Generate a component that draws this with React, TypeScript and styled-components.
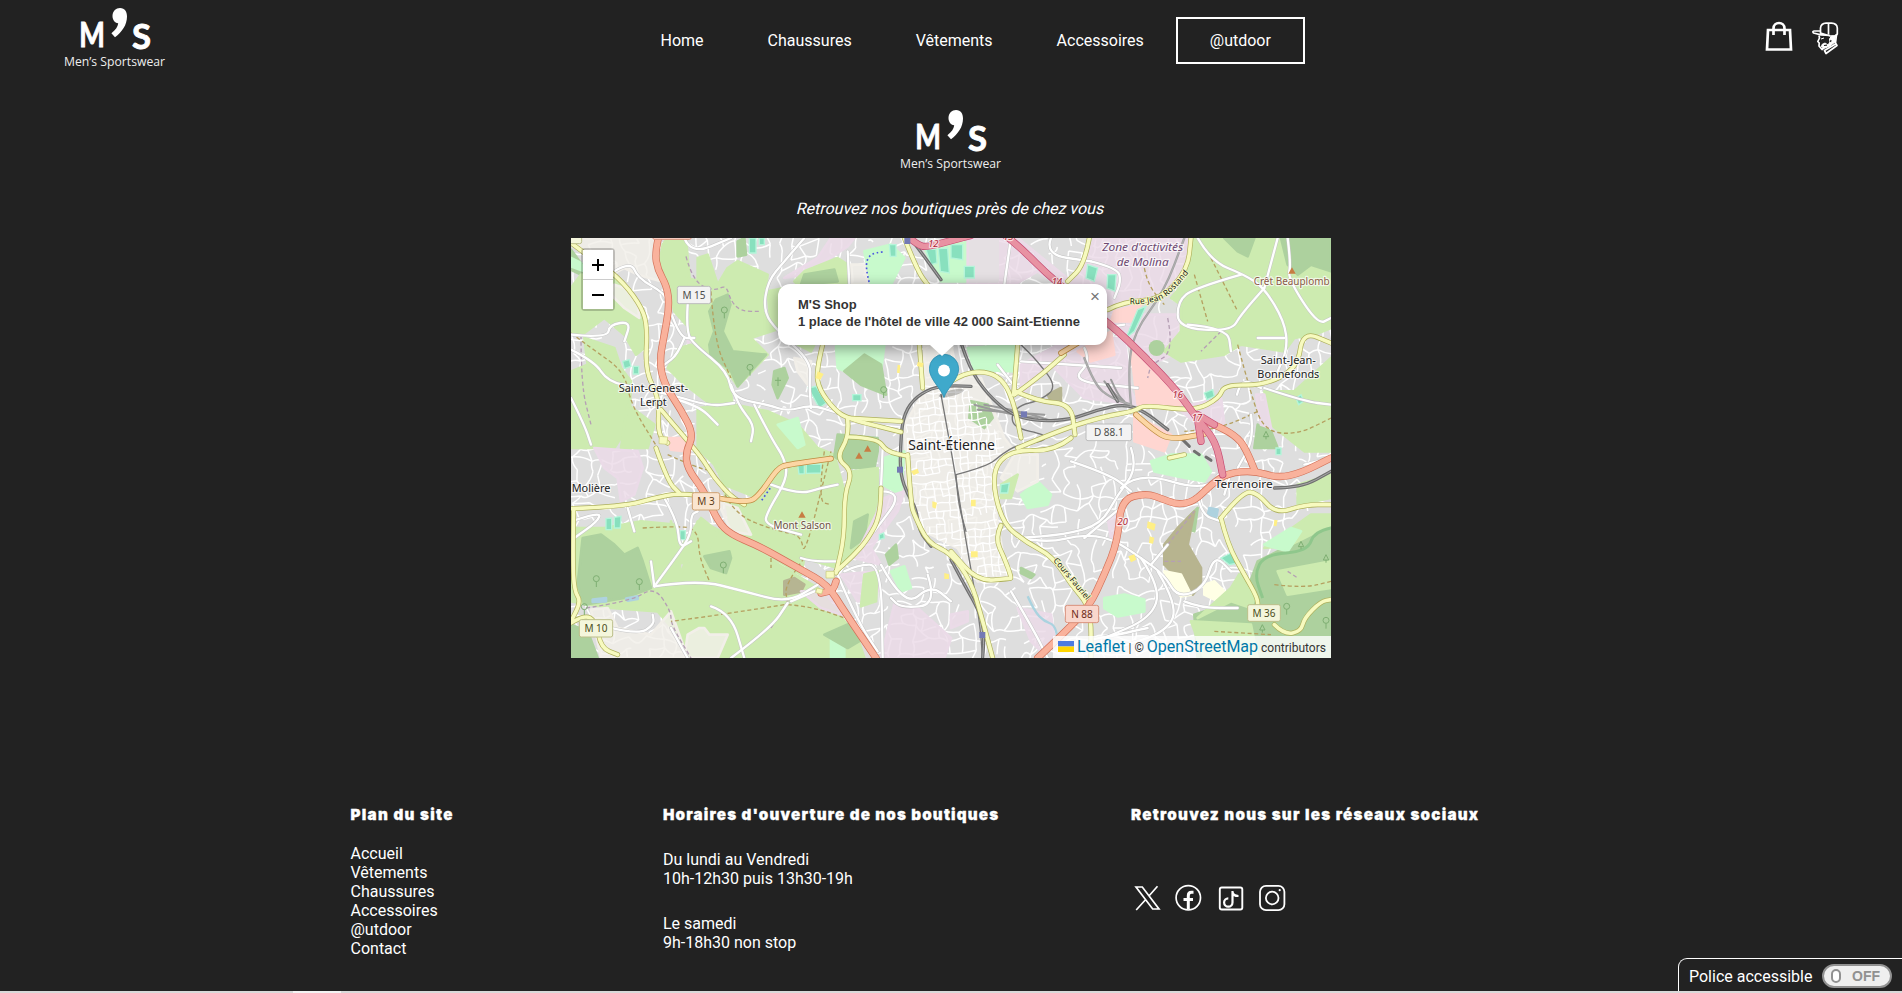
import React from "react";
import styled, { createGlobalStyle } from "styled-components";

const GlobalStyle = createGlobalStyle`
  * { box-sizing: border-box; }
  body { margin: 0; background: #222; color: #fff; font: 16px/19px Roboto, sans-serif; overflow: hidden; }
  a { color: inherit; text-decoration: none; }
`;

const Page = styled.div`
  height: 993px;
  display: flex;
  flex-direction: column;
  background: #222;
`;

const Header = styled.header`
  height: 80px;
  flex: none;
  display: grid;
  grid-template-columns: 628.5px max-content 1fr;
`;

const LogoSvg = styled.svg`
  display: block;
  width: 102px;
  height: 62px;
  overflow: visible;
`;

const Brand = styled.a`
  padding: 8px 0 0 64px;
`;

const Nav = styled.nav`
  display: flex;
  justify-content: flex-start;
  align-items: center;
`;

const NavLink = styled.a<{ $boxed?: boolean }>`
  flex: none;
  padding: 12px 32px;
  ${(p) => p.$boxed && "border: 2px solid #fff;"}
`;

const Tools = styled.div`
  display: flex;
  justify-content: flex-end;
  gap: 18px;
  padding: 21px 63px 0 0;
`;

const Icon = styled.svg<{ $w: number; $h: number }>`
  display: block;
  flex: none;
  width: ${(p) => p.$w}px;
  height: ${(p) => p.$h}px;
`;

const Main = styled.main`
  flex: none;
  height: 711px;
  display: flex;
  flex-direction: column;
  align-items: center;
  padding-top: 30px;
`;

const Tagline = styled.p`
  margin: 27px 0 20px;
  transform: skewX(-14deg);
`;

const MapFrame = styled.div`
  position: relative;
  width: 760px;
  height: 420px;
  overflow: hidden;
  background: #ddd;
`;

const MapSvg = styled.svg`
  display: block;
  width: 760px;
  height: 420px;
`;

const ZoomControl = styled.div`
  position: absolute;
  left: 10px;
  top: 10px;
  border: 2px solid rgba(0, 0, 0, 0.2);
  border-radius: 4px;
  background-clip: padding-box;
`;

const ZoomButton = styled.div<{ $last?: boolean }>`
  width: 30px;
  height: ${(p) => (p.$last ? 29 : 30)}px;
  display: flex;
  align-items: center;
  justify-content: center;
  background: #fff;
  border-bottom: ${(p) => (p.$last ? 0 : 1)}px solid #ccc;
`;

const Popup = styled.div`
  position: absolute;
  left: 207px;
  top: 46px;
  width: 329px;
  height: 61px;
  padding: 13px 24px 13px 20px;
  border-radius: 12px;
  background: #fff;
  color: #333;
  box-shadow: 0 3px 14px rgba(0, 0, 0, 0.4);
  font: bold 13px/16.5px "Liberation Sans", Arial, sans-serif;
  white-space: nowrap;
`;

const PopupClose = styled.span`
  position: absolute;
  top: 0;
  right: 0;
  width: 24px;
  height: 24px;
  color: #757575;
  font: 17px/25px "Liberation Sans", Tahoma, sans-serif;
  text-align: center;
`;

const PopupTip = styled.span`
  position: absolute;
  left: 152px;
  top: 61px;
  border: solid transparent;
  border-width: 0 12px;
  border-top: 11px solid #fff;
`;

const Pin = styled.svg`
  position: absolute;
  left: 358px;
  top: 116px;
  width: 45px;
  height: 46px;
`;

const Attribution = styled.div`
  position: absolute;
  right: 0;
  bottom: 0;
  width: 278px;
  height: 22px;
  display: flex;
  align-items: baseline;
  justify-content: space-between;
  padding: 0 5px;
  background: rgba(255, 255, 255, 0.8);
  color: #333;
  font-size: 12px;
  line-height: 21px;
  white-space: nowrap;

  a { color: #0078a8; font-size: 16px; }
`;

const Footer = styled.footer`
  flex: none;
  height: 200px;
  display: grid;
  grid-template-columns: 312.5px 468px 420px;
  padding: 14px 0 0 350.5px;
`;

const Title = styled.h3<{ $spacing: number }>`
  margin: 0;
  font: 900 15.2px/19px Inter, sans-serif;
  letter-spacing: ${(p) => p.$spacing}px;
  white-space: nowrap;
  -webkit-text-stroke: 0.3px #fff;
`;

const LinkList = styled.div`
  display: flex;
  flex-direction: column;
  margin-top: 20px;
`;

const Hours = styled.p<{ $top: number }>`
  margin: ${(p) => p.$top}px 0 0;
`;

const Socials = styled.div`
  display: flex;
  gap: 14px;
  margin-top: 60px;
  padding-left: 2px;
`;

const BottomStrip = styled.div`
  height: 2px;
  flex: none;
  padding-left: 293px;
  background: #d9d9d9;
`;

const StripThumb = styled.div`
  width: 48px;
  height: 2px;
  background: #f3f3f3;
`;

const FontSwitch = styled.div`
  position: fixed;
  right: 0;
  bottom: 2px;
  width: 224px;
  height: 33px;
  display: flex;
  align-items: center;
  justify-content: space-between;
  padding: 3px 10px 0 10px;
  border: solid #fff;
  border-width: 1px 0 0 1px;
  border-radius: 9px 0 0 0;
  background: #222;
`;

const Toggle = styled.span`
  width: 70px;
  height: 24px;
  display: flex;
  align-items: center;
  justify-content: space-between;
  padding: 0 10px 0 7px;
  margin-top: -2px;
  border: 2px solid #919191;
  border-radius: 12px;
  background: #efefef;
  color: #919191;
  font: bold 14px/20px "Liberation Sans", Arial, sans-serif;
`;

const Knob = styled.span`
  width: 10px;
  height: 14px;
  border: 2px solid #919191;
  border-radius: 5px;
  background: #fff;
`;

function Logo() {
  return (
    <LogoSvg viewBox="0 0 102 62" fill="#fff">
      <text x="15.2" y="39.400" fontFamily="Lato" fontWeight="700" fontSize="34" stroke="#fff" strokeWidth=".9" textLength="25.600" lengthAdjust="spacingAndGlyphs">M</text>
      <path d="M56 0C61 0 63 4 63 8.500C63 17 58 24 51 29.200L47.400 25.200C51.500 22 53.700 18.800 54.200 15.200C50.500 14.800 48.300 11.500 48.500 7.500C48.700 3 52 0 56 0Z" />
      <text x="68" y="41.200" fontFamily="Lato" fontWeight="700" fontSize="34" stroke="#fff" strokeWidth=".9" textLength="19" lengthAdjust="spacingAndGlyphs">S</text>
      <text x="0" y="57.800" fontFamily="Open Sans, Noto Sans" fontSize="13" fill="#eee" textLength="101" lengthAdjust="spacingAndGlyphs">Men’s Sportswear</text>
    </LogoSvg>
  );
}

type Area = [string, string];

const GREEN = "#cdebb0";
const FOREST = "#add19e";
const LILAC = "#ebdbe8";
const PINK = "#ffd6d1";
const PARK = "#c8facc";
const CREAM = "#f2efe9";
const TEAL = "#88e0be";
const SAND = "#b6b592";
const SCHOOL = "#ffffe5";

/* Land cover, in map units (three per pixel). */
const areas: Area[] = [
  [CREAM, "0,0 250,0 250,80 270,130 200,110 160,90 120,110 60,60"],
  [FOREST, "0,35 40,90 30,110 0,95"],
  [PARK, "0,60 30,75 40,100 0,85"],
  [GREEN, "0,150 30,110 130,125 210,205 220,330 195,350 160,290 100,240 40,285 0,290"],
  [CREAM, "130,140 160,150 200,195 205,240 160,210 120,170"],
  [GREEN, "40,300 130,330 150,390 180,430 175,560 130,630 0,630 0,400 50,380"],
  [GREEN, "170,500 250,560 230,630 150,630"],
  [GREEN, "290,0 345,0 350,60 360,160 345,260 310,220 290,140 265,80 275,20"],
  [GREEN, "345,120 440,140 470,90 500,70 590,110 575,220 615,275 540,300 590,350 500,445 470,400 370,320 350,280"],
  [GREEN, "380,60 410,50 440,140 380,150"],
  [FOREST, "435,185 470,170 478,200 455,280 485,340 585,350 530,410 500,445 480,400 420,360 415,320 430,280 415,220"],
  [LILAC, "350,310 370,320 390,380 440,440 425,445 375,375"],
  [GREEN, "290,390 325,330 360,320 470,400 485,500 420,500 330,430"],
  [GREEN, "380,510 490,500 590,520 680,560 740,630 790,650 820,760 800,990 700,960 690,1010 480,885 460,750 500,790 560,780 460,740 430,680 380,630"],
  [GREEN, "590,160 640,150 640,260 600,270"],
  [FOREST, "500,10 520,0 525,50 500,55"],
  [LILAC, "640,120 700,110 830,25 850,0 780,0 740,60"],
  [GREEN, "670,130 700,100 800,60 830,80 830,140 680,140"],
  [FOREST, "700,110 790,95 800,130 690,140"],
  [PARK, "880,40 960,20 1000,60 960,140 900,140"],
  [CREAM, "840,80 880,80 890,140 840,140"],
  [PARK, "1060,30 1280,0 1280,130 1110,130"],
  [LILAC, "1190,0 1340,0 1500,130 1540,80 1570,0 1850,0 1850,100 1770,180 1690,190 1660,230 1840,230 1830,340 1760,370 1680,300 1620,260 1600,180 1460,140 1400,100 1330,140 1190,140"],
  [LILAC, "1500,300 1660,300 1680,460 1700,500 1540,480 1440,380 1350,470 1350,380"],
  [PINK, "1520,340 1620,280 1630,350 1560,370"],
  [PINK, "1680,340 1750,380 1800,450 1860,520 1700,500"],
  [PINK, "1690,530 1800,590 1780,640 1690,610"],
  [PINK, "1630,220 1710,200 1680,250 1620,250"],
  [GREEN, "1860,0 2280,0 2280,270 2230,290 2170,300 2140,340 2010,320 1960,350 1830,370 1780,340 1830,280 1830,200 1800,180 1850,120"],
  [FOREST, "2130,0 2280,0 2280,100 2220,80 2180,110 2150,80"],
  [FOREST, "1960,0 2050,0 2030,55 2000,40"],
  [GREEN, "2080,460 2170,460 2280,360 2280,640 2200,640 2100,560"],
  [FOREST, "2060,560 2100,580 2120,630 2050,630"],
  [LILAC, "1820,510 1950,480 1960,560 1880,560"],
  [LILAC, "2055,470 2080,470 2100,570 2070,560"],
  [PARK, "795,325 940,320 930,400 870,420 800,390"],
  [GREEN, "680,320 730,320 720,340"],
  [FOREST, "820,400 880,350 930,380 945,470 870,440"],
  [FOREST, "610,400 640,390 650,420 620,480 605,440"],
  [PARK, "620,560 680,540 700,620 680,630"],
  [CREAM, "670,360 720,370 710,440 680,400"],
  [PARK, "1190,330 1330,320 1330,400 1210,395"],
  [CREAM, "1060,320 1140,320 1160,410 1230,420 1300,600 1330,640 1260,700 1280,860 1310,1020 1220,1030 1160,930 1060,880 1010,760 1000,560 1060,460"],
  [FOREST, "1200,490 1250,500 1265,540 1240,570 1195,540"],
  [SAND, "1430,470 1470,450 1470,490 1440,490"],
  [PINK, "290,600 340,600 345,640 300,635"],
  [LILAC, "70,630 200,640 215,690 190,770 150,790 140,720 100,690"],
  [PARK, "940,660 1000,640 990,770 935,740"],
  [FOREST, "800,590 920,600 920,640 910,690 840,690 790,655"],
  [GREEN, "845,700 920,690 920,780 900,860 840,950 810,980 830,790"],
  [FOREST, "850,850 890,830 880,900 840,930"],
  [GREEN, "0,870 100,870 210,850 310,860 330,1010 380,850 430,870 490,900 690,1020 740,1050 790,1110 860,1200 880,1260 350,1260 320,1190 260,1120 120,1110 0,1090"],
  [GREEN, "300,850 325,935 390,840 440,880 400,960 310,980"],
  [FOREST, "35,900 90,890 130,920 160,950 200,930 215,970 240,1050 160,1080 40,1100 20,1040"],
  [FOREST, "400,955 475,940 480,960 465,1005 420,990"],
  [CREAM, "440,790 500,810 540,890 480,880"],
  [CREAM, "60,1115 110,1110 140,1170 240,1190 300,1120 350,1260 90,1260"],
  [CREAM, "350,1190 385,1170 400,1170 415,1190 470,1190 440,1260 340,1260"],
  ["#aed2df", "65,1085 105,1080 105,1090 65,1092"],
  ["#aed2df", "165,1082 200,1075 200,1083 170,1088"],
  [FOREST, "0,1160 50,1180 80,1260 0,1260"],
  [SAND, "640,1030 670,1020 700,1040 690,1060 640,1070"],
  [LILAC, "690,1060 780,1060 840,1140 750,1110"],
  [LILAC, "940,780 1000,760 980,820 900,930 930,980 850,960"],
  [LILAC, "810,1010 920,1000 920,1060 860,1090"],
  [PARK, "960,1000 1000,985 1020,1050 990,1060"],
  [FOREST, "945,950 975,920 980,960 955,980"],
  [LILAC, "970,1100 1040,1110 1140,1200 1120,1260 930,1260"],
  [GREEN, "880,1010 920,1000 915,1090 870,1105"],
  [PARK, "780,1200 820,1200 820,1260 780,1260"],
  [FOREST, "760,1190 840,1155 880,1200 830,1230"],
  [PARK, "1350,770 1400,730 1440,770 1430,800 1370,810"],
  [CREAM, "1330,650 1400,650 1400,730 1340,760 1290,720"],
  [GREEN, "1290,740 1340,710 1320,780 1290,780"],
  [PARK, "1740,670 1800,650 1860,650 1890,650 1920,700 1900,730 1820,715 1750,700"],
  [LILAC, "1610,840 1650,810 1650,860 1620,900"],
  [FOREST, "1880,810 1870,880 1840,870 1850,840"],
  ["#b7b48f", "1870,820 1850,920 1890,990 1890,1040 1865,1070 1830,1030 1780,980 1780,920 1820,870"],
  [SCHOOL, "1780,1000 1830,1010 1860,1070 1830,1075 1800,1040"],
  [SCHOOL, "1900,1040 1930,1030 1960,1060 1930,1085 1900,1070"],
  [PARK, "1600,1080 1660,1070 1720,1085 1720,1120 1640,1135 1600,1110"],
  [FOREST, "2060,970 2140,930 2280,860 2280,1260 1880,1260 1870,1130 2020,1080"],
  [GREEN, "1980,1050 2010,1000 2050,1080 2040,1110 1980,1090 1880,1140"],
  [GREEN, "2120,1000 2280,970 2280,1050 2150,1070"],
  [GREEN, "2080,930 2220,830 2280,830 2280,860 2160,920"],
  [PARK, "2080,920 2160,870 2190,880 2150,940"],
  [GREEN, "2180,740 2280,710 2280,780 2180,800"],
  [GREEN, "1860,1150 2040,1160 2060,1260 1900,1260"],
  [LILAC, "1340,1110 1440,1130 1450,1200 1420,1250 1380,1210"],
  [LILAC, "1140,1130 1190,1120 1190,1150 1140,1170"],
  ["#aed2df", "1915,810 1940,815 1935,840 1910,835"],
  [FOREST, "1350,990 1390,1010 1380,1020 1350,1005"],
];

/* Sports grounds and other small teal blocks. */
const pitches: Area[] = [
  [TEAL, "535,0 555,0 555,45 535,45"], [TEAL, "565,0 580,0 580,20 565,20"],
  [TEAL, "155,370 175,365 180,385 160,392"], [TEAL, "187,385 203,385 203,408 187,408"],
  [TEAL, "712,450 735,445 765,495 745,510"], [TEAL, "845,470 870,470 870,488 845,488"],
  [TEAL, "1065,35 1095,33 1098,75 1080,80"], [TEAL, "1102,32 1130,30 1135,105 1108,100"], [TEAL, "955,20 975,20 975,55 958,55"],
  [TEAL, "1140,20 1175,20 1175,65 1140,60"], [TEAL, "1180,85 1210,85 1210,120 1180,120"],
  [TEAL, "1550,80 1580,90 1570,130 1545,120"], [TEAL, "1610,110 1635,110 1632,160 1608,150"],
  [TEAL, "1700,215 1725,205 1690,280 1665,300"], [TEAL, "105,842 122,840 122,875 105,875"], [TEAL, "130,838 150,835 148,870 130,870"],
  [TEAL, "327,878 343,878 343,905 327,905"], [TEAL, "680,680 700,679 700,707 684,708"], [TEAL, "706,679 750,678 750,705 706,706"],
  [TEAL, "1900,465 1925,455 1930,475 1908,485"], [TEAL, "2175,480 2190,470 2198,490 2183,500"],
  [TEAL, "1950,960 1980,945 2000,975 1975,980"], [TEAL, "1290,740 1315,735 1310,765 1288,765"],
  [TEAL, "925,890 938,885 940,900 925,905"], [TEAL, "2115,630 2130,630 2130,650 2115,650"],
];

const trunk = [
  "262,0 252,45 260,95 288,145 295,205 280,290 265,370 280,440 330,515 368,590 345,640 348,690 400,760 440,850 480,890 560,922 690,995 770,1040 820,1120 915,1260",
  "1400,1260 1490,1175 1555,1105 1600,1010 1640,910 1650,785 1725,765 1780,785 1820,800 1870,790 1920,740 1970,705 2050,698 2120,720 2190,705 2280,660",
  "2050,695 2025,630 1990,590 1930,560 1890,545",
  "750,1065 785,1060 795,1030",
];
const motorway = ["1300,-10 1340,20 1450,130 1620,260 1720,355 1820,460 1880,545 1935,610 1955,710", "1015,0 1040,20 1065,28 1140,8 1200,-8", "1880,545 1890,610", "1880,530 1930,560"];
const primary = ["440,780 530,798 570,765 620,690 650,680 780,662", "1695,530 1750,580 1800,605 1900,588", "1470,345 1520,315"];
const secondary = [
  "0,15 60,60 140,115 205,195 230,260 222,400 265,480 260,590 290,615", "270,515 325,580 390,655 430,720 480,775 520,800",
  "255,630 290,730 325,765", "0,812 160,805 250,780 325,765 440,780", "755,320 735,400 745,455 790,515 830,542 990,582", "830,540 990,550",
  "830,545 835,595 795,660 845,700 820,770 820,900 795,1005", "835,597 920,600 945,640 1010,655", "930,750 930,830 890,905 845,955 795,1000",
  "1045,320 1055,450", "1140,430 1180,405 1250,400 1300,430 1330,500 1350,600", "1340,320 1328,470", "1330,470 1400,420 1480,350", "1330,458 1400,490 1500,498 1512,590",
  "1340,630 1470,575 1600,535 1690,520 1720,500 1870,520 1945,480 1960,440 2080,442 2180,390 2195,280 2280,315",
  "1500,600 1450,640 1320,635 1260,700 1290,850 1360,910 1445,955 1500,1040 1560,1110 1560,1260", "1290,862 1272,900 1300,960 1322,1020 1315,1022 1220,1030 1140,940",
  "1010,650 1020,800 1030,830 1070,915 1140,945 1200,1030 1230,1130 1265,1260", "1950,840 2015,760 2060,765 2115,828 2200,800 2280,800", "1950,840 1970,920 2020,1010 2060,1080 2060,1110",
  "8,812 5,960 10,1060 30,1090 0,1150", "0,1155 40,1130 75,1150 90,1230 140,1250", "1000,0 1040,100 1070,140", "1610,215 1660,190 1770,185 1850,95 1860,0", "1555,0 1540,80 1490,130",
  "2110,1160 2140,1190 2190,1180 2200,1140 2250,1090 2280,1085", "1795,660 1840,650", 
];
const local = [
  "130,100 180,70 200,120 280,165 290,200 330,300 370,300", "350,200 345,280 370,320 470,400 485,480 590,500 650,520 720,500 800,525", "700,0 640,70 590,130 577,220 620,280 720,370 715,440 720,510",
  "340,0 360,50 480,0", "0,290 110,300 115,260 180,250 160,310", "0,335 70,370 110,430 200,450 300,470 420,505 490,495", "480,440 500,500 550,560 540,610", "830,40 835,140",
  "300,480 380,500 440,560", "340,300 320,350 280,380", "0,480 40,560 60,620", "550,500 600,600 640,660 650,720 590,820 580,860 690,890",
  "600,740 680,770 750,750 800,740", "250,1045 320,950 360,890 360,830 380,820", "250,1045 380,1025 520,1060 650,1095 740,1040", "250,1045 240,970", "420,1105 480,1125 520,1260",
  "280,780 320,850 325,930 360,910", "170,810 190,880", "0,850 90,820 80,850 10,900", "690,960 720,970 800,970", "800,1010 860,1150 920,1240", "820,1000 860,980 930,980 935,1260", "930,980 1000,1110 1080,1040 1140,1090",
  "930,760 1000,760 910,880", "935,630 930,750", "1070,1010 1100,1100 990,1110 960,1080", "660,1090 730,1060", "480,1260 600,1170 650,1095", "100,1165 200,1190 250,1160 245,1130", "300,1170 350,1260",
  "1880,0 1920,70 2020,110 2080,150 2140,250 2150,330 2120,400", "2150,0 2160,80 2150,120 2240,260 2280,240", "2010,110 1870,150 1820,190 1820,270 1980,280 2010,230 2080,150", "2080,150 2120,0", "2140,300 2060,300", "1850,260 1970,270 1980,340",
  "1320,0 1300,140", "1440,0 1420,50 1560,70", "1560,70 1640,90 1650,130 1630,180", "1280,380 1350,470", "1350,370 1650,390", "1540,330 1560,370 1500,430 1700,450", "1590,270 1660,260",
  "1680,630 1700,690 1640,770 1590,860 1480,890 1340,900", "1340,900 1430,915 1530,890 1620,900 1710,960 1780,1010 1820,1080 1900,1050 1930,950 1980,1000", "1710,960 1770,1050 1740,1140 1600,1200", "1760,1000 1820,1100 1790,1180 1640,1230 1560,1240",
  "1540,900 1660,800", "1500,670 1620,710 1680,760", "1880,770 1890,830 1950,850", "1320,1060 1390,1180 1430,1260", "1980,1000 2020,1000", "1840,1090 1890,1110 2000,1110", "1730,1170 1640,1190 1560,1205", "1740,980 1790,920", "1650,750 1700,700 1900,760 1960,690",
  "1998,470 2010,420 2070,450", "2040,530 2050,600 2000,690", "1980,700 1960,770", "2080,450 2200,490 2280,500", "2280,660 2200,680",
];
const paths = [
  "345,55 365,130 430,160 465,140 480,190 510,220 570,220", "0,285 60,330 160,400 180,500 260,630", "420,160 430,310 480,420", "30,290 30,440 60,560", "290,650 380,690 430,700 490,830 620,880 690,890 700,960 780,640", "215,870 300,865 380,870 385,960 420,1040",
  "45,1110 180,1090 250,1045 300,1120 300,1160 360,1260", "650,1100 720,1105 850,1150", "700,960 640,1040 650,1095", "600,1170 650,1090", "640,1100 450,1130 300,1150", "1720,90 1730,140 1780,200", "1790,240 1810,340 1740,380 1730,420", "1870,110 1910,250", "1920,60 2000,220",
  "1950,280 1890,340", "2000,320 2040,470 2080,580 2180,590 2280,540", "2060,520 1960,570 1840,580", "1780,970 1830,970", "2110,1040 2200,1050 2280,1030", "1930,1180 2100,1190", "2150,1000 2180,1020", "600,940 600,990", "760,640 740,790 780,800", "1790,920 1870,820",
];
const rails = [
  "1010,-10 1045,35 1110,125", "1172,320 1195,390 1250,470 1320,530 1400,550 1500,545 1580,515 1660,498 1720,520 1790,575", "1200,445 1140,442 1080,450 1025,485 995,540 988,630 988,710 1010,770 1035,810 1045,880 1080,925",
  "1140,965 1180,1040 1225,1120 1240,1180 1235,1260", "1540,360 1570,440 1620,480 1680,500", "2110,750 2190,750 2280,700", "1610,440 1640,490", "1680,500 1670,400 1690,280 1780,160 1840,0",
];
const thinRails = ["1110,470 1145,660 1180,880 1225,1140 1235,1260", "1155,710 1250,685 1290,650 1340,620 1420,610 1425,590 1330,570 1320,530 1350,500 1400,490 1460,450 1400,370 1350,320", "1155,710 1160,790 1185,880"];

/* Deterministic jittered street mesh for the built-up areas. */
function streetMesh(x0: number, y0: number, x1: number, y1: number, step: number, jitter: number, keep: number) {
  let seed = 11;
  const rnd = () => {
    seed = (seed * 16807) % 2147483647;
    return seed / 2147483647;
  };
  const cols = Math.ceil((x1 - x0) / step) + 1;
  const rows = Math.ceil((y1 - y0) / step) + 1;
  const pts: [number, number][][] = [];
  for (let r = 0; r < rows; r++) {
    pts.push([]);
    for (let c = 0; c < cols; c++) {
      pts[r].push([Math.round(x0 + c * step + (rnd() - 0.5) * jitter), Math.round(y0 + r * step + (rnd() - 0.5) * jitter)]);
    }
  }
  let d = "";
  for (let r = 0; r < rows - 1; r++) {
    for (let c = 0; c < cols - 1; c++) {
      const [x, y] = pts[r][c];
      const [rx, ry] = pts[r][c + 1];
      const [dx, dy] = pts[r + 1][c];
      const b = (rnd() - 0.5) * jitter * 0.7;
      if (rnd() < keep) d += `M${x} ${y}Q${(x + rx) / 2} ${(y + ry) / 2 + b} ${rx} ${ry}`;
      if (rnd() < keep) d += `M${x} ${y}Q${(x + dx) / 2 + b} ${(y + dy) / 2} ${dx} ${dy}`;
    }
  }
  return d;
}

const townStreets = streetMesh(-20, -20, 2320, 1300, 36, 30, 0.62);
const centreStreets = streetMesh(1000, 440, 1300, 1060, 22, 8, 0.8);

/* Turns a point list into a smoothed path through the segment midpoints. */
function smooth(list: string) {
  const p = list.split(" ").map((s) => s.split(",").map(Number));
  let d = `M${p[0][0]} ${p[0][1]}`;
  for (let i = 1; i < p.length - 1; i++) {
    d += `Q${p[i][0]} ${p[i][1]} ${(p[i][0] + p[i + 1][0]) / 2} ${(p[i][1] + p[i + 1][1]) / 2}`;
  }
  const last = p[p.length - 1];
  return `${d}L${last[0]} ${last[1]}`;
}

function Roads({ lines, casing, fill, width, edge = 4 }: { lines: string[]; casing: string; fill: string; width: number; edge?: number }) {
  return (
    <g fill="none" strokeLinecap="round" strokeLinejoin="round">
      {lines.map((l, i) => <path key={`c${i}`} d={smooth(l)} stroke={casing} strokeWidth={width + edge} />)}
      {lines.map((l, i) => <path key={`f${i}`} d={smooth(l)} stroke={fill} strokeWidth={width} />)}
    </g>
  );
}

interface LabelProps { x: number; y: number; w: number; size?: number; color?: string; italic?: boolean; children: string }

function Label({ x, y, w, size = 33, color = "#222", italic, children }: LabelProps) {
  return (
    <text x={x} y={y} textAnchor="middle" textLength={w} lengthAdjust="spacingAndGlyphs" fontSize={size} fill={color}
      fontStyle={italic ? "italic" : "normal"} stroke="#fff" strokeOpacity=".7" strokeWidth="7" strokeLinejoin="round" paintOrder="stroke">
      {children}
    </text>
  );
}

function Shield({ x, y, w, h = 52, fill, edge, color, children }: { x: number; y: number; w: number; h?: number; fill: string; edge: string; color: string; children?: string }) {
  return (
    <g>
      <rect x={x} y={y} width={w} height={h} rx="6" fill={fill} stroke={edge} strokeWidth="3" />
      <text x={x + w / 2} y={y + h / 2 + 11} textAnchor="middle" fontSize="30" fill={color}>{children}</text>
    </g>
  );
}

function CityMap() {
  return (
    <MapSvg viewBox="0 0 2280 1260" fontFamily="Noto Sans">
      <defs>
        <clipPath id="centre"><path d="M1060 440L1180 440L1260 560L1320 640L1260 700L1280 860L1310 1010L1220 1020L1160 930L1060 890L1015 760L1005 560Z" /></clipPath>
        <path id="rostand" d="M1676 199Q1760 200 1795 168T1862 92" />
        <path id="fauriel" d="M1446 968L1550 1092" />
      </defs>
      <rect width="2280" height="1260" fill="#dedede" />
      <path d={townStreets} fill="none" stroke="#fff" strokeWidth="4.500" />
      {areas.map(([fill, points], i) => (
        <polygon key={i} points={points} fill={fill} stroke={fill} strokeWidth="8" strokeLinejoin="round" fillOpacity={fill === LILAC || fill === CREAM ? 0.82 : 1} />
      ))}
      {pitches.map(([fill, points], i) => <polygon key={i} points={points} fill={fill} stroke="#b5f5da" strokeWidth="4" />)}
      <g clipPath="url(#centre)"><path d={centreStreets} fill="none" stroke="#fff" strokeWidth="4" transform="rotate(-5 1150 750)" /></g>
      <path d={smooth("1370,1075 1390,1120 1420,1150 1450,1160 1460,1200")} fill="none" stroke="#aad3df" strokeWidth="7" />
      <path d={smooth("2280,870 2230,880 2210,940 2080,950 2050,1010 2075,1080")} fill="none" stroke="#8fc78c" strokeWidth="9" />
      <g fill="none" strokeLinejoin="round">
        {paths.map((l, i) => <path key={i} d={smooth(l)} stroke={i % 3 === 0 ? "#b59fb4" : "#b5a060"} strokeWidth="4" strokeDasharray="12 8" />)}
      </g>
      <path d="M935 42C880 45 880 75 895 135M605 740L570 790" fill="none" stroke="#4b55e0" strokeWidth="5" strokeDasharray="5 8" />
      <Roads lines={local} casing="#c6c6c6" fill="#fff" width={7} edge={3} />
      <g fill="none" strokeLinecap="round">
        {["1210,500 1320,530 1400,540", "1220,515 1340,525 1420,530", "1240,500 1350,520 1440,548", "1600,430 1640,480 1670,500", "1620,425 1640,470 1660,490"].map((l) => (
          <path key={l} d={smooth(l)} stroke="#9b9b9b" strokeWidth="6" />
        ))}
        {thinRails.map((l) => <path key={l} d={smooth(l)} stroke="#777" strokeWidth="4" />)}
        {rails.map((l, i) => <path key={l} d={smooth(l)} stroke={i === 4 || i === 7 ? "#a3a3a3" : "#707070"} strokeWidth={i === 4 || i === 7 ? 7 : 10} />)}
        {rails.map((l, i) => <path key={`i${l}`} d={smooth(l)} stroke="#c4c4c4" strokeWidth={i === 4 || i === 7 ? 1 : 2} />)}
        <path d="M1835 605L1855 625M1870 640L1885 650M1905 657L1920 667" stroke="#707070" strokeWidth="9" />
      </g>
      <Roads lines={secondary} casing="#aeb05c" fill="#f7fabf" width={11} />
      <Roads lines={primary} casing="#bd8a3f" fill="#fcd6a4" width={13} />
      <Roads lines={trunk} casing="#d27057" fill="#f9b29c" width={18} />
      <Roads lines={motorway} casing="#c54a72" fill="#e892a2" width={18} />
      <path d="M765 1000h25v20h-25zM738 1050l18 4-4 14-18-4zM265 595l25 2-2 22-24-2z" fill="#f7fabf" stroke="#c6c777" strokeWidth="2" />
      {[[1350, 520], [978, 686], [1225, 1182], [1000, 0]].map(([x, y]) => <rect key={x} x={x} y={y} width="18" height="18" fill="#7379b4" />)}
      <circle cx="1757" cy="330" r="24" fill={FOREST} />
      <g fill="none" stroke="#7faf73" strokeWidth="3">
        {[[460, 216], [537, 388], [76, 1022], [205, 1031], [40, 1106], [457, 981], [938, 455], [2147, 1105], [2265, 1147]].map(([x, y]) => (
          <path key={`${x}-${y}`} d={`M${x - 9} ${y}a9 9 0 1 0 18 0a9 9 0 1 0-18 0M${x} ${y + 9}v16`} />
        ))}
        <path d="M621 418v26M612 427h18M2085 580l-8 16h16zM2085 596v8M2190 910l-8 16h16zM2190 926v8M2265 950l-8 16h16zM2265 966v8M2074 1160l-8 16h16zM2074 1176v8" />
      </g>
      <g fill="#ffef85">
        <path d="M980 380l8 2-2 24-8-2zM1040 372l18 4-4 12-16-4zM1200 785h14v20h-14zM1730 850l24 8-4 20-22-8zM1736 895l14 4-4 18-12-2zM1200 940h20v18h-20zM1672 955l18-6 6 16-16 8zM2110 845l10 2-4 18-8-2zM1020 700l20-8 4 12-16 8zM740 400l18 8-10 18-14-6zM1084 790l14 4-4 18-10-4zM1120 1005l14 4v14h-14z" />
      </g>
      <g fill="#c77d43">
        <path d="M2163 88l11 19h-22zM693 820l11 19h-22zM864 643l11 19h-22zM890 622l11 19h-22z" />
      </g>

      <Label x={1142} y={637} w={260} size={43}>Saint-Étienne</Label>
      <Label x={247} y={462} w={208}>Saint-Genest-</Label>
      <Label x={247} y={503} w={80}>Lerpt</Label>
      <Label x={60} y={762} w={116}>Molière</Label>
      <Label x={2152} y={379} w={165}>Saint-Jean-</Label>
      <Label x={2152} y={421} w={186}>Bonnefonds</Label>
      <Label x={2018} y={751} w={174}>Terrenoire</Label>
      <Label x={694} y={873} w={173} size={30} color="#6f5046">Mont Salson</Label>
      <Label x={2162} y={141} w={228} size={30} color="#8a5a46">Crêt Beauplomb</Label>
      <Label x={1715} y={40} w={243} color="#6e4a73" italic>Zone d'activités</Label>
      <Label x={1715} y={84} w={156} color="#6e4a73" italic>de Molina</Label>
      {([["12", 1087, 28], ["13", 1312, 5], ["14", 1458, 140], ["16", 1820, 479], ["17", 1878, 549], ["20", 1655, 860]] as [string, number, number][]).map(([t, x, y]) => (
        <Label key={t} x={x} y={y} w={31} size={28} color="#b01c32" italic>{t}</Label>
      ))}
      <g fontSize="25" fill="#222" stroke="#f7fabf" strokeWidth="5" paintOrder="stroke">
        <text><textPath href="#rostand" textLength="212">Rue Jean Rostand</textPath></text>
        <text><textPath href="#fauriel" textLength="156">Cours Fauriel</textPath></text>
      </g>
      <Shield x={319} y={145} w={100} fill="#f3f3f3" edge="#bcbcbc" color="#4d4d4d">M 15</Shield>
      <Shield x={1545} y={558} w={137} h={50} fill="#f3f3f3" edge="#bcbcbc" color="#4d4d4d">D 88.1</Shield>
      <Shield x={364} y={764} w={82} fill="#fae5d0" edge="#d0a272" color="#5c3c18">M 3</Shield>
      <Shield x={25} y={1145} w={100} fill="#f4f6dc" edge="#bcbf8a" color="#4a4c20">M 10</Shield>
      <Shield x={1483} y={1102} w={100} fill="#f9d7cd" edge="#d9907b" color="#6d2a17">N 88</Shield>
      <Shield x={2030} y={1100} w={98} h={50} fill="#f4f6dc" edge="#bcbf8a" color="#4a4c20">M 36</Shield>
      <Shield x={-70} y={-35} w={102} fill="#f4f6dc" edge="#bcbf8a" color="#4a4c20" />
      <rect x="245" y="-40" width="116" height="44" rx="6" fill="#f9d7cd" stroke="#d9907b" strokeWidth="3" />
    </MapSvg>
  );
}

export default function App() {
  return (
    <>
      <GlobalStyle />
      <Page>
        <Header>
          <Brand href="#"><Logo /></Brand>
          <Nav>
            <NavLink href="#">Home</NavLink>
            <NavLink href="#">Chaussures</NavLink>
            <NavLink href="#">Vêtements</NavLink>
            <NavLink href="#">Accessoires</NavLink>
            <NavLink href="#" $boxed>@utdoor</NavLink>
          </Nav>
          <Tools>
            <Icon $w={28} $h={31} viewBox="0 0 28 31" fill="none" stroke="#fff" strokeWidth="2.700">
              <path d="M3 9H25L26 28.500H2ZM8.500 14V7.500C8.500 4 11 2 14 2S19.500 4 19.500 7.500V14" />
            </Icon>
            <Icon $w={28} $h={34} viewBox="0 0 28 34" fill="none" stroke="#fff" strokeWidth="1.700" strokeLinejoin="round">
              <path d="M9.500 11V7Q10 2.500 15 2.200H20.500Q26 2.500 26.300 7V13L24 15H19L9.500 12ZM10 10L3 10Q1 10.200 2.500 12L10 13.800L19 14.500M17.500 2V13.500" />
              <path d="M8 14.500L8.500 17L6.800 20.500L8.200 22L8 25L11 28.500L14 26M25.500 14L24.500 22L26 24.500L15 32.500L13.500 29.500L24.500 23" />
              <path d="M10 18L13 17M24.500 15H20.500L18.500 18L19 21L17 24L14 22L11 23.500L10.500 26L14 27L19 25L24 21Z" fill="#fff" strokeWidth="1" />
              <path d="M13 24.500L16 24.200M20 19L19.500 21" stroke="#222" strokeWidth="1.200" />
            </Icon>
          </Tools>
        </Header>
        <Main>
          <Logo />
          <Tagline>Retrouvez nos boutiques près de chez vous</Tagline>
          <MapFrame>
            <CityMap />
            <Pin viewBox="0 0 45 46">
              <ellipse cx="23" cy="41" rx="13" ry="3" transform="rotate(-14 15 43)" fill="#000" opacity=".22" />
              <path d="M15 43.500C12.500 35 .3 25 .3 14.900A14.700 14.700 0 0 1 29.700 14.900C29.700 25 17.500 35 15 43.500Z" fill="#3fa9cb" stroke="#2f8fb1" strokeWidth=".8" />
              <circle cx="15" cy="16.500" r="6" fill="#fff" />
            </Pin>
            <Popup>
              M'S Shop<br />1 place de l'hôtel de ville 42 000 Saint-Etienne
              <PopupClose>×</PopupClose>
              <PopupTip />
            </Popup>
            <ZoomControl>
              <ZoomButton>
                <Icon $w={12} $h={12} viewBox="0 0 12 12" stroke="#000" strokeWidth="2"><path d="M0 6H12M6 0V12" /></Icon>
              </ZoomButton>
              <ZoomButton $last>
                <Icon $w={12} $h={12} viewBox="0 0 12 12" stroke="#000" strokeWidth="2"><path d="M0 6H12" /></Icon>
              </ZoomButton>
            </ZoomControl>
            <Attribution>
              <Icon $w={16} $h={11} viewBox="0 0 16 11"><path fill="#4c7be1" d="M0 0h16v5.500H0z" /><path fill="#ffd500" d="M0 5.500h16V11H0z" /></Icon>
              <a href="#">Leaflet</a><span>|</span><span>©</span><a href="#">OpenStreetMap</a><span>contributors</span>
            </Attribution>
          </MapFrame>
        </Main>
        <Footer>
          <section>
            <Title $spacing={1.3}>Plan du site</Title>
            <LinkList>
              {["Accueil", "Vêtements", "Chaussures", "Accessoires", "@utdoor", "Contact"].map((t) => <a key={t} href="#">{t}</a>)}
            </LinkList>
          </section>
          <section>
            <Title $spacing={1.17}>Horaires d'ouverture de nos boutiques</Title>
            <Hours $top={26}>Du lundi au Vendredi<br />10h-12h30 puis 13h30-19h</Hours>
            <Hours $top={26}>Le samedi<br />9h-18h30 non stop</Hours>
          </section>
          <section>
            <Title $spacing={1.24}>Retrouvez nous sur les réseaux sociaux</Title>
            <Socials>
              <Icon $w={28} $h={28} viewBox="0 0 28 28" fill="none" stroke="#fff" strokeWidth="1.700">
                <path d="M3 3H9.300L26 25H19.700ZM24.500 2.300L15.700 12.200M12.500 15.800L3.200 26" />
              </Icon>
              <Icon $w={28} $h={28} viewBox="0 0 28 28" fill="none" stroke="#fff" strokeWidth="1.700">
                <circle cx="13.300" cy="13.800" r="12.200" />
                <path d="M13.300 25.500V11.800Q13.300 8.300 16.500 8.300H18.500M8.500 15.500H18" strokeWidth="3" />
              </Icon>
              <Icon $w={28} $h={28} viewBox="0 0 28 28" fill="none" stroke="#fff" strokeWidth="1.900">
                <rect x="2.800" y="3.500" width="22.500" height="22" rx="2" />
                <path d="M15.500 7V18.500A4.200 4.200 0 1 1 11.300 14.300M15.500 8Q16 12 21.500 12" strokeWidth="2.200" />
              </Icon>
              <Icon $w={28} $h={28} viewBox="0 0 28 28" fill="none" stroke="#fff" strokeWidth="1.800">
                <rect x="1" y="1.800" width="24.400" height="24.400" rx="6" />
                <circle cx="13.200" cy="14" r="6.300" />
                <circle cx="20.700" cy="6.200" r="1.100" fill="#fff" stroke="none" />
              </Icon>
            </Socials>
          </section>
        </Footer>
        <BottomStrip><StripThumb /></BottomStrip>
      </Page>
      <FontSwitch>
        <span>Police accessible</span>
        <Toggle><Knob />OFF</Toggle>
      </FontSwitch>
    </>
  );
}
